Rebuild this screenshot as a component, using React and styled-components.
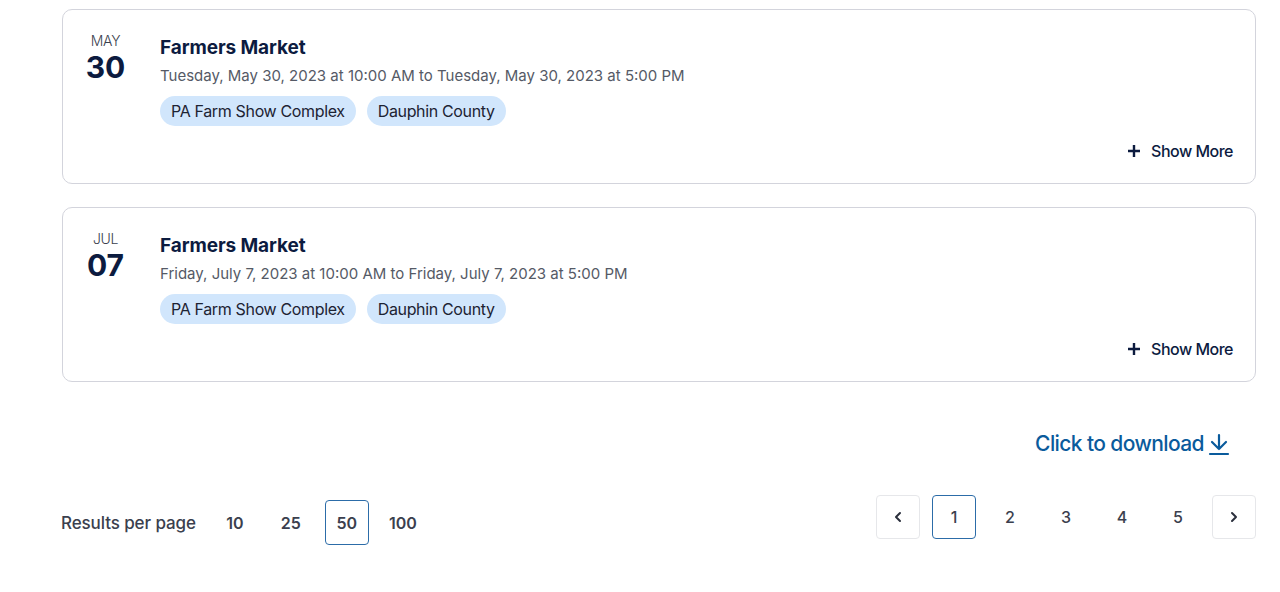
import React from 'react'
import styled, { createGlobalStyle } from 'styled-components'

const GlobalStyle = createGlobalStyle`
    body {
        margin: 0;
        background: #fff;
        font-family: "Inter", "Noto Sans", sans-serif;
        color: #0c1b3f;
    }
`;

const Page = styled.div`
    width: 1194px;
    padding: 9px 0 0 62px;
`;
const List = styled.div`
    display: flex;
    flex-direction: column;
    gap: 23px;
`;
const Card = styled.div`
    border: 1px solid #d3d4dc;
    border-radius: 10px;
    padding: 22px 22px 20px 0;
    display: grid;
    grid-template-columns: 85px 1fr;
    column-gap: 12px;
    position: relative;
    height: 175px;
    box-sizing: border-box;
`;
const DateCol = styled.div`
    display: flex;
    flex-direction: column;
    align-items: center;
`;
const Month = styled.div`
    font-size: 14px;
    font-weight: 300;
    color: #3b3f4e;
    letter-spacing: -0.3px;
    line-height: 18px;
`;
const Day = styled.div`
    font-size: 30px;
    font-weight: 700;
    color: #0c1b3f;
    line-height: 34px;
`;
const Body = styled.div`
    display: flex;
    flex-direction: column;
    padding-top: 4px;
`;
const Title = styled.div`
    font-size: 19px;
    font-weight: 700;
    letter-spacing: -0.1px;
    color: #0c1b3f;
    line-height: 24px;
`;
const When = styled.div`
    font-size: 15px;
    font-weight: 400;
    color: #555a66;
    letter-spacing: 0;
    line-height: 20px;
    margin-top: 6px;
`;
const Tags = styled.div`
    display: flex;
    gap: 11px;
    margin-top: 10px;
`;
const Tag = styled.span`
    background: #d1e6fc;
    color: #1d2333;
    border-radius: 15px;
    height: 30px;
    display: inline-flex;
    align-items: center;
    padding: 0 11px;
    font-size: 16px;
    letter-spacing: -0.35px;
`;
const ShowMore = styled.button`
    position: absolute;
    right: 22px;
    bottom: 22px;
    border: none;
    background: none;
    padding: 0;
    display: flex;
    align-items: center;
    gap: 10px;
    font-family: inherit;
    font-size: 16px;
    font-weight: 500;
    letter-spacing: -0.5px;
    color: #0c1b3f;
    cursor: pointer;
`;
const DownloadRow = styled.div`
    display: flex;
    justify-content: flex-end;
    padding: 49px 25px 0 0;
`;
const Download = styled.a`
    display: flex;
    align-items: center;
    gap: 3px;
    color: #0a5b9c;
    font-size: 21px;
    font-weight: 500;
    letter-spacing: -0.6px;
    text-decoration: none;
`;
const Footer = styled.div`
    display: flex;
    justify-content: space-between;
    align-items: flex-start;
    margin-top: 39px;
`;
const PerPage = styled.div`
    display: flex;
    align-items: center;
    gap: 12px;
    padding-top: 5px;
    margin-left: -1px;
`;
const Label = styled.span`
    font-size: 17px;
    font-weight: 500;
    color: #3b3f4e;
    letter-spacing: -0.1px;
    margin-right: 5px;
`;
const Option = styled.button`
    width: 44px;
    height: 45px;
    box-sizing: border-box;
    border: 1px solid ${p => (p.$active ? '#2c6ca8' : 'transparent')};
    border-radius: 4px;
    background: #fff;
    font-family: inherit;
    font-size: 16px;
    font-weight: 600;
    color: #3b3f4e;
    display: flex;
    align-items: center;
    justify-content: center;
    padding: 0;
`;
const Pager = styled.div`
    display: flex;
    gap: 12px;
`;
const PageBtn = styled.button`
    width: 44px;
    height: 44px;
    box-sizing: border-box;
    border: 1px solid ${p => (p.$active ? '#2c6ca8' : p.$arrow ? '#e6e7ea' : 'transparent')};
    border-radius: 4px;
    background: #fff;
    font-family: inherit;
    font-size: 16px;
    font-weight: 500;
    color: #3b3f4e;
    display: flex;
    align-items: center;
    justify-content: center;
    padding: 0;
`;

const PlusIcon = () => (
    <svg width="14" height="14" viewBox="0 0 14 14">
        <path d="M7 1v12M1 7h12" stroke="#0c1b3f" strokeWidth="2.4" />
    </svg>
);

const DownloadIcon = () => (
    <svg width="24" height="24" viewBox="0 0 24 24" fill="none" stroke="#0a5b9c" strokeWidth="2.2" strokeLinecap="round" strokeLinejoin="round">
        <path d="M12 3v14M5 10l7 7 7-7M3 22h18" />
    </svg>
);

const Chevron = ({ dir }) => (
    <svg width="14" height="14" viewBox="0 0 14 14" fill="none" stroke="#2a2f3c" strokeWidth="2" strokeLinecap="round" strokeLinejoin="round">
        {dir === 'left' ? <path d="M9 3L5 7l4 4" /> : <path d="M5 3l4 4-4 4" />}
    </svg>
);

const events = [
    { month: 'MAY', day: '30', when: 'Tuesday, May 30, 2023 at 10:00 AM to Tuesday, May 30, 2023 at 5:00 PM' },
    { month: 'JUL', day: '07', when: 'Friday, July 7, 2023 at 10:00 AM to Friday, July 7, 2023 at 5:00 PM' },
];

const App = () => {
  return (
    <Page>
            <GlobalStyle />
            <List>
                {events.map(ev => (
                    <Card key={ev.day}>
                        <DateCol>
                            <Month>{ev.month}</Month>
                            <Day>{ev.day}</Day>
                        </DateCol>
                        <Body>
                            <Title>Farmers Market</Title>
                            <When>{ev.when}</When>
                            <Tags>
                                <Tag>PA Farm Show Complex</Tag>
                                <Tag>Dauphin County</Tag>
                            </Tags>
                        </Body>
                        <ShowMore><PlusIcon />Show More</ShowMore>
                    </Card>
                ))}
            </List>
            <DownloadRow>
                <Download href="#">Click to download<DownloadIcon /></Download>
            </DownloadRow>
            <Footer>
                <PerPage>
                    <Label>Results per page</Label>
                    <Option>10</Option>
                    <Option>25</Option>
                    <Option $active>50</Option>
                    <Option>100</Option>
                </PerPage>
                <Pager>
                    <PageBtn $arrow><Chevron dir="left" /></PageBtn>
                    <PageBtn $active>1</PageBtn>
                    <PageBtn>2</PageBtn>
                    <PageBtn>3</PageBtn>
                    <PageBtn>4</PageBtn>
                    <PageBtn>5</PageBtn>
                    <PageBtn $arrow><Chevron dir="right" /></PageBtn>
                </Pager>
            </Footer>
        </Page>
  )
}

export default App
